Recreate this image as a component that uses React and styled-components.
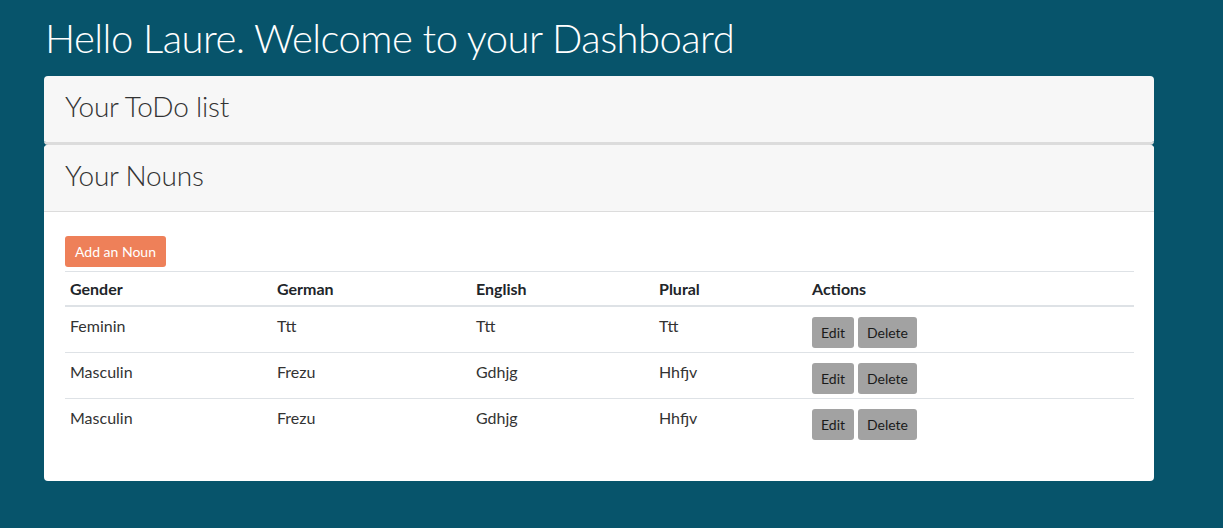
import React from "react";
import styled, { createGlobalStyle } from "styled-components";

const Global = createGlobalStyle`
  html, body { margin: 0; padding: 0; }
  body {
    background: #07546b;
    font-family: "Lato", "Open Sans", sans-serif;
    color: #212529;
    min-height: 528px;
  }
`;

const Page = styled.div`
  padding: 14px 69px 0 44px;
  display: flex;
  flex-direction: column;
`;

const Title = styled.h1`
  margin: 0 0 14px 1px;
  font-size: 40px;
  line-height: 48px;
  font-weight: 300;
  letter-spacing: -0.55px;
  color: #ffffff;
`;

const Card = styled.section`
  background: #ffffff;
  border-radius: 4px;
  overflow: hidden;
  border-bottom: ${(p) => (p.$collapsed ? "3px solid #dcdcdc" : "none")};
`;

const CardHeader = styled.div`
  background: #f7f7f7;
  padding: 13px 21px 19px;
  border-bottom: ${(p) => (p.$last ? "none" : "1px solid #dcdcdc")};
`;

const CardTitle = styled.h3`
  margin: 0;
  font-size: 28px;
  line-height: 34px;
  font-weight: 300;
  letter-spacing: -0.2px;
  color: #333;
`;

const CardBody = styled.div`
  padding: 24px 20px 21px 21px;
`;

const AddButton = styled.button`
  font-family: inherit;
  font-size: 14px;
  color: #fff;
  background: #ee8059;
  border: none;
  border-radius: 3px;
  height: 31px;
  padding: 0 10px;
  margin-bottom: 4px;
  cursor: pointer;
`;

const Table = styled.table`
  width: 100%;
  table-layout: fixed;
  border-collapse: collapse;
  margin-bottom: 16px;
  font-size: 16px;
  line-height: 24px;
`;

const Th = styled.th`
  text-align: left;
  font-weight: 700;
  padding: 5px 5px 4px;
  border-top: 1px solid #dee2e6;
  border-bottom: 2px solid #dee2e6;
  width: ${(p) => p.$w || "auto"};
  color: #212529;
`;

const Td = styled.td`
  padding: 10px 5px 4px;
  vertical-align: top;
  line-height: 17px;
  border-top: ${(p) => (p.$first ? "none" : "1px solid #dee2e6")};
  color: #333;
`;

const Actions = styled.div`
  display: flex;
  gap: 4px;
`;

const GreyButton = styled.button`
  font-family: inherit;
  font-size: 14px;
  color: #1a1a1a;
  background: #a2a2a2;
  border: none;
  border-radius: 3px;
  height: 31px;
  padding: 0 9px;
  cursor: pointer;
`;

const rows = [
  ["Feminin", "Ttt", "Ttt", "Ttt"],
  ["Masculin", "Frezu", "Gdhjg", "Hhfjv"],
  ["Masculin", "Frezu", "Gdhjg", "Hhfjv"],
];

export default function App() {
  return (
    <>
      <Global />
      <Page>
        <Title>Hello Laure. Welcome to your Dashboard</Title>
        <Card $collapsed>
          <CardHeader $last>
            <CardTitle>Your ToDo list</CardTitle>
          </CardHeader>
        </Card>
        <Card>
          <CardHeader>
            <CardTitle>Your Nouns</CardTitle>
          </CardHeader>
          <CardBody>
            <AddButton>Add an Noun</AddButton>
            <Table>
              <thead>
                <tr>
                  <Th $w="197px">Gender</Th>
                  <Th $w="189px">German</Th>
                  <Th $w="173px">English</Th>
                  <Th $w="143px">Plural</Th>
                  <Th>Actions</Th>
                </tr>
              </thead>
              <tbody>
                {rows.map((r, i) => (
                  <tr key={i}>
                    {r.map((c, j) => (
                      <Td key={j} $first={i === 0}>{c}</Td>
                    ))}
                    <Td $first={i === 0}>
                      <Actions>
                        <GreyButton>Edit</GreyButton>
                        <GreyButton>Delete</GreyButton>
                      </Actions>
                    </Td>
                  </tr>
                ))}
              </tbody>
            </Table>
          </CardBody>
        </Card>
      </Page>
    </>
  );
}
